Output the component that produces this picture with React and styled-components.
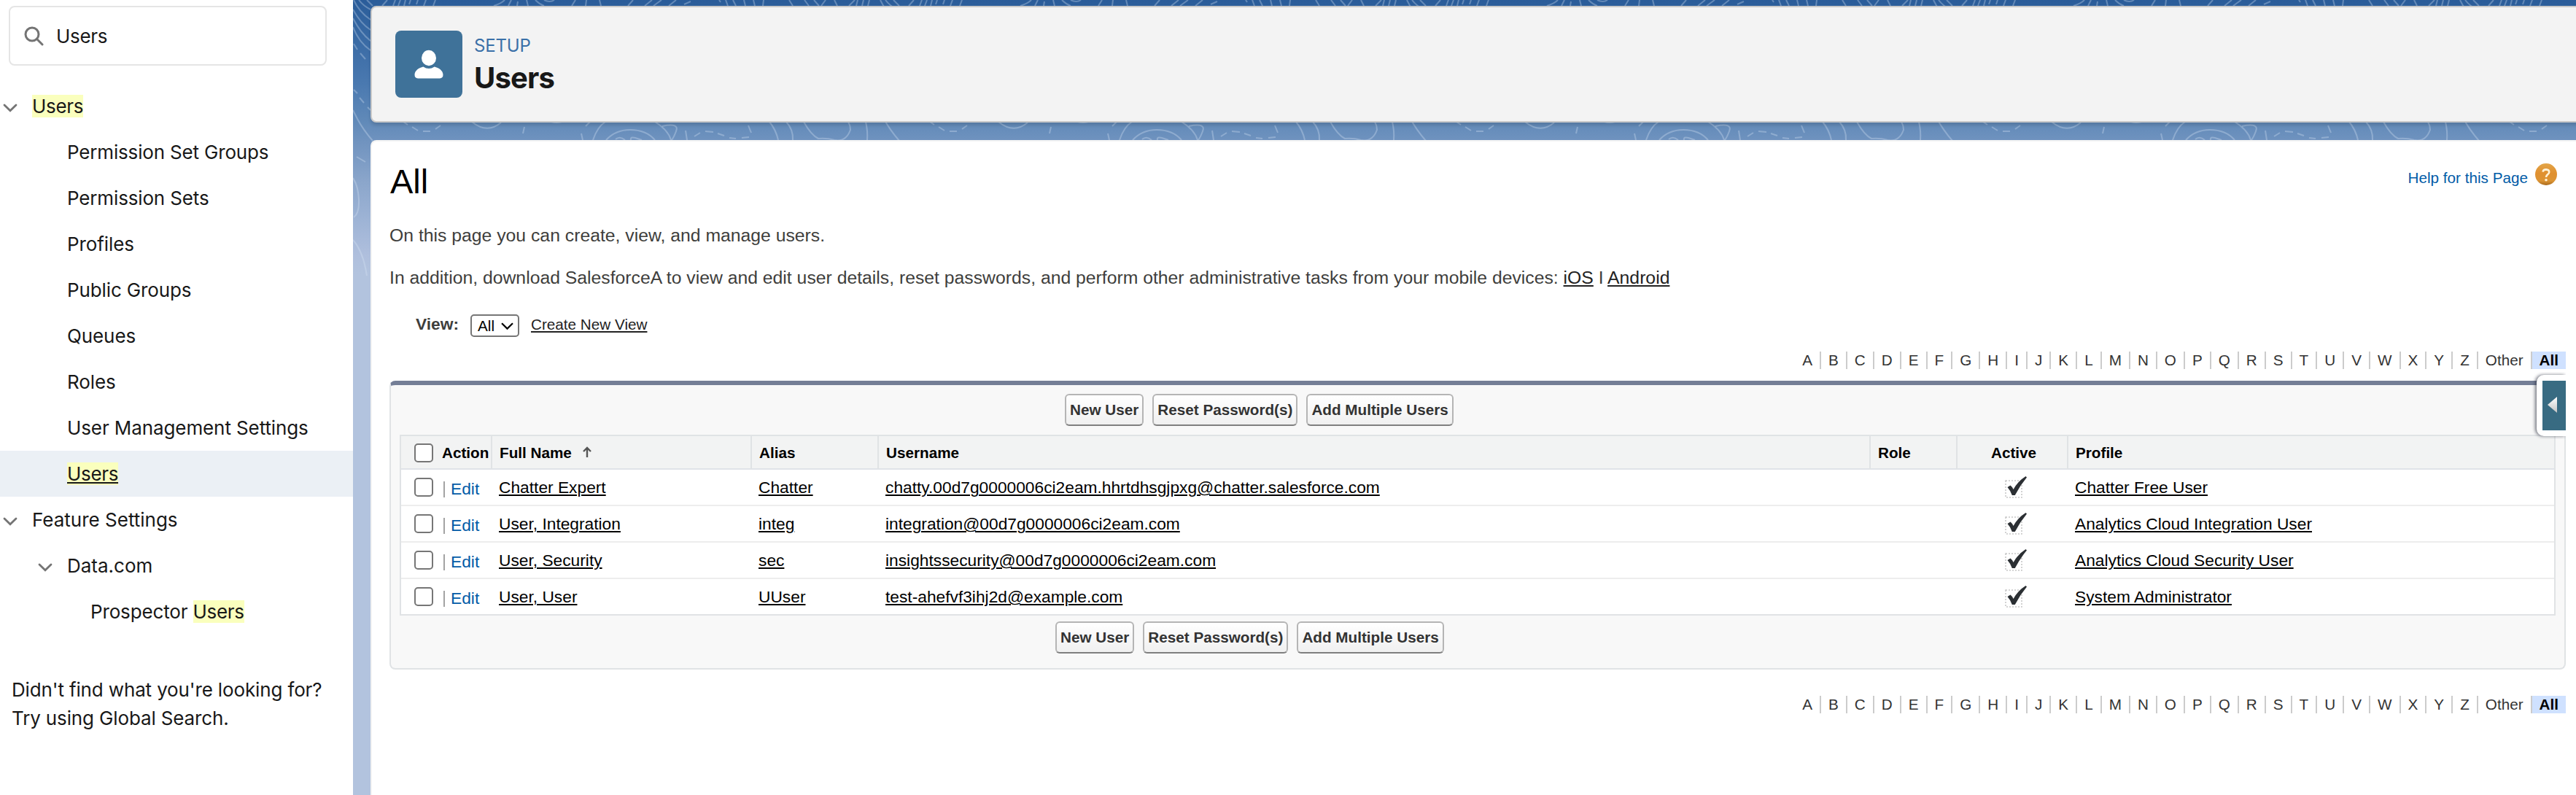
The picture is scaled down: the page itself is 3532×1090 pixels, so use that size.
import React from "react";
import styled, { createGlobalStyle, css } from "styled-components";

const Global = createGlobalStyle`
  *, *::before, *::after { box-sizing: border-box; }
  html, body { margin: 0; padding: 0; background: #fff; }
  body { overflow: hidden; }
`;

const ui = css`font-family: Inter, "Liberation Sans", sans-serif;`;
const classic = css`font-family: "Liberation Sans", Arial, sans-serif;`;

const Page = styled.div`
  display: flex;
  width: 3532px;
  height: 1090px;
  overflow: hidden;
  ${classic}
`;

/* ---------- sidebar ---------- */
const Sidebar = styled.nav`
  flex: 0 0 484px;
  background: #fff;
  color: #181818;
  font-size: 26px;
  ${ui}
`;
const SearchBox = styled.label`
  display: flex;
  align-items: center;
  gap: 17px;
  margin: 8px 36px 24px 12px;
  height: 82px;
  padding-left: 19px;
  border: 2px solid #e5e5e5;
  border-radius: 8px;
  letter-spacing: -0.34px;
`;
const Tree = styled.ul`
  margin: 0;
  padding: 0;
  list-style: none;
`;
const TreeRow = styled.li`
  display: flex;
  align-items: center;
  height: 63px;
  padding-left: ${(p) => p.$indent}px;
  background: ${(p) => (p.$selected ? "#ebf0f5" : "transparent")};
  letter-spacing: ${(p) => p.$tight || 0}px;
  text-decoration: ${(p) => (p.$selected ? "underline" : "none")};
  text-decoration-thickness: 2px;
  text-underline-offset: 2px;
  white-space: pre;
`;
const Chevron = styled.svg`
  flex: none;
  width: 20px;
  height: 12px;
  margin: 4px 20px 0 0;
`;
const Mark = styled.mark`
  background: #faffbd;
  color: inherit;
  letter-spacing: -0.34px;
`;
const Hint = styled.p`
  margin: 56px 0 0 16px;
  line-height: 39px;
  letter-spacing: -0.14px;
`;

/* ---------- stage ---------- */
const Stage = styled.main`
  position: relative;
  flex: 1;
  min-width: 0;
  display: flex;
  flex-direction: column;
  gap: 24px;
  padding: 8px 0 0 24px;
  overflow: hidden;
  background: linear-gradient(#2a5c99 0, #2f619d 16px, #4a79b0 115px, #6089b8 165px, #7093bf 194px, #8ba6cb 250px, #9db3d5 300px, #afbfdd 350px, #b2c3de 375px);
`;
const Topography = styled.svg`
  position: absolute;
  left: 0;
  top: 0;
  width: 100%;
  height: 400px;
`;
const HeaderCard = styled.header`
  position: relative;
  display: flex;
  align-items: flex-start;
  gap: 16px;
  height: 160px;
  margin-right: -12px;
  padding: 32px 0 0 32px;
  background: #f3f3f3;
  border: 2px solid #c9c9c9;
  border-radius: 8px;
  box-shadow: 0 4px 4px rgba(0, 0, 0, 0.12);
  ${ui}
`;
const AppIcon = styled.span`
  display: grid;
  place-items: center;
  width: 92px;
  height: 92px;
  border-radius: 8px;
  background: #3f7299;
`;
const Eyebrow = styled.div`
  margin-top: 6px;
  font-size: 24px;
  line-height: 30px;
  letter-spacing: -0.2px;
  color: #3a70a8;
`;
const PageName = styled.h1`
  margin: 0;
  font-size: 40px;
  line-height: 57px;
  font-weight: 700;
  letter-spacing: -0.8px;
  color: #181818;
`;
const Card = styled.section`
  position: relative;
  flex: 1;
  margin-right: -12px;
  padding: 27px 24px 0 24px;
  background: #fff;
  border: 2px solid #f3f3f3;
  border-bottom: 0;
  border-radius: 8px 8px 0 0;
`;
const TitleRow = styled.div`
  display: flex;
  justify-content: space-between;
  height: 56px;
  margin-bottom: 31px;
`;
const Title = styled.h2`
  margin: 0 0 0 1px;
  font-size: 47px;
  font-weight: 400;
  line-height: 56px;
  color: #000;
`;
const Help = styled.a`
  display: flex;
  gap: 10px;
  margin: 3px 12px 0 0;
  color: #015ba7;
  font-size: 20.7px;
  line-height: 39px;
`;
const Para = styled.p`
  margin: 0 0 28px;
  font-size: 24.75px;
  line-height: 30px;
  color: #3e3e3c;
`;
const Link = styled.a`
  color: ${(p) => p.$c || "#000"};
  text-decoration: underline;
  text-decoration-thickness: 2px;
  text-underline-offset: 2px;
`;
const ViewBar = styled.div`
  display: flex;
  align-items: flex-start;
  height: 31px;
  margin: 35px 0 20px 36px;
  font-size: 20.7px;
  line-height: 28px;
`;
const ViewLabel = styled.b`
  width: 75px;
  font-size: 22.75px;
  line-height: 26px;
  color: #3e3e3c;
`;
const Picker = styled.span`
  display: flex;
  align-items: center;
  gap: 8px;
  width: 67px;
  height: 31px;
  margin-right: 16px;
  padding-left: 8px;
  border: 2px solid #767676;
  border-radius: 5px;
  color: #000;
`;
const Rolodex = styled.div`
  display: flex;
  justify-content: flex-end;
  height: 24px;
  font-size: 20.7px;
  line-height: 24px;
  color: #333;
`;
const Letter = styled.span`
  padding: 0 10px;
  border-right: ${(p) => (p.$on ? "0" : "2px solid #ccc")};
  background: ${(p) => (p.$on ? "#cfe1ff" : "transparent")};
  color: ${(p) => (p.$on ? "#000" : "inherit")};
  font-weight: ${(p) => (p.$on ? 700 : 400)};
`;
const Panel = styled.div`
  position: relative;
  height: 396px;
  margin: 16px 0 36px;
  background: #f8f8f8;
  border: 2px solid #e0e3e5;
  border-top: 6px solid #747e96;
  border-radius: 8px;
`;
const Buttons = styled.div`
  display: flex;
  gap: 12px;
  padding: ${(p) => p.$pad};
`;
const Button = styled.button`
  height: 44px;
  padding: 0 5px;
  border: 2px solid #b5b5b5;
  border-bottom-color: #7f7f7f;
  border-radius: 6px;
  background: linear-gradient(#fff, #f0f0f0);
  color: #333;
  font: 700 20.7px/40px "Liberation Sans", Arial, sans-serif;
`;
const Table = styled.div`
  margin: 0 12px;
  border: 2px solid #e0e3e5;
  background: #fff;
  font-size: 22.75px;
`;
const Row = styled.div`
  display: grid;
  grid-template-columns: 123px 356px 174px 1360px 119px 152px 1fr;
  height: 50px;
  line-height: 48px;
  border-bottom: 2px solid #ededed;
  &:last-child { height: 48px; border-bottom: 0; }
`;
const HeadRow = styled(Row)`
  height: 46px;
  line-height: 45px;
  font-size: 20.7px;
  font-weight: 700;
  background: #f2f3f3;
  border-bottom-color: #e0e3e8;
`;
const Cell = styled.div`
  padding-left: ${(p) => (p.$center ? 0 : 11)}px;
  text-align: ${(p) => (p.$center ? "center" : "left")};
`;
const HeadCell = styled.div`
  padding-left: ${(p) => (p.$center ? 4 : 10)}px;
  border-left: 2px solid #e0e3e5;
  text-align: ${(p) => (p.$center ? "center" : "left")};
`;
const ActionCell = styled.div`
  display: flex;
  align-items: center;
  padding-left: 18px;
  line-height: 44px;
`;
const Box = styled.span`
  width: 26px;
  height: 26px;
  margin-right: ${(p) => p.$gap}px;
  border: 2px solid #767676;
  border-radius: 5px;
  background: #fff;
`;
const Bar = styled.span`
  width: 2px;
  height: 22px;
  margin: 6px 8px 0 0;
  background: #a3a3a3;
`;
const Edit = styled.a`
  padding-top: 4px;
  color: #015ba7;
`;
const Arrow = styled.svg`
  width: 14px;
  height: 16px;
  margin-left: 14px;
`;
const Check = styled.svg`
  display: block;
  width: 32px;
  height: 34px;
  margin: 7px 0 0 66px;
`;
const Drawer = styled.div`
  position: absolute;
  right: -2px;
  top: -14px;
  width: 40px;
  height: 84px;
  padding: 8px 0 8px 8px;
  border-radius: 10px 0 0 10px;
  background: #fff;
  box-shadow: -2px 0 4px rgba(40, 45, 60, 0.65);
  clip-path: inset(-4px 0 -4px -8px);
`;
const DrawerFace = styled.div`
  height: 68px;
  background: #386b82;
`;

const Down = () => (
  <Chevron viewBox="0 0 20 12">
    <path d="M2 2 L10 9.8 L18 2" fill="none" stroke="#747474" strokeWidth="2.8" strokeLinecap="round" />
  </Chevron>
);

/* Contour lines of one background tile, 722px wide. */
const contours = [
  "M0 151Q3 157 6 163Q14 178 27 193",
  "M8 0Q14 8 24 13M1 0Q8 16 24 27M0 13Q10 32 24 41M0 25Q10 45 24 56M0 37Q8 58 24 69",
  "M0 244C9 258 12 290 1 298", "M0 329Q14 345 19 378",
  "M19 0L27 8M40 8L47 0M55 8L58 0M62 8L65 0M70 8L72 0M77 6L79 0M87 6L89 0M97 8L100 0M110 8L113 0",
  "M193 8Q203 5 208 0M213 8L217 0M225 8L226 2M238 0L240 8M250 0Q256 6 262 8M262 0Q270 4 276 0M300 8L305 0M319 8L320 0M338 0L340 8",
  "M377 8L384 0M400 8L410 0M412 8L423 0M433 8L443 0M454 6L463 2M502 0L504 3",
  "M511 0L514 8M521 0L525 8M536 0L538 8M549 0L551 8M562 8L563 0M598 0L603 8M619 0L625 8M632 0L639 8M642 8L648 0M660 0L664 8M680 8L688 0M690 8L692 0M698 8L700 0M706 8L708 0",
  "M163 167Q184 184 203 168", "M272 167Q279 169 286 167",
  "M329 192Q335 174 346 167M414 167Q432 178 436 192",
  "M347 192Q360 178 380 178Q402 178 414 192",
  "M360 191Q366 186 373 192M381 192Q380 187 387 189L396 192",
  "M424 173Q448 168 443 180Q440 188 437 192",
  "M571 167Q580 178 583 192M594 167Q604 178 603 192",
  "M618 167Q628 185 638 190Q650 189 660 192Q676 195 682 178Q682 172 679 167", "M703 167Q706 180 705 192",
];
const dashes =
  "M1 60L6 68M10 73L17 81M1 123L6 128M9 134L15 141M20 147L24 151M5 215L17 222M69 167L75 171M81 174L89 179M96 180L106 180M113 177L120 172M233 183L235 174M313 183L315 192M319 173L325 167M456 179L458 192M468 187L476 182M483 180L494 181M500 183L509 186M516 189L525 190M533 189L543 188M542 172L546 182";

const Pattern = () => (
  <Topography>
    <defs>
      <pattern id="topo" width="722" height="400" patternUnits="userSpaceOnUse">
        <g fill="none" stroke="#dbe6f6" strokeOpacity="0.32" strokeWidth="2">
          {contours.map((d) => <path key={d} d={d} />)}
          <path d={dashes} />
        </g>
      </pattern>
    </defs>
    <rect width="100%" height="400" fill="url(#topo)" />
  </Topography>
);

const letters = [..."ABCDEFGHIJKLMNOPQRSTUVWXYZ", "Other"];
const Alphabet = () => (
  <Rolodex>
    {letters.map((l) => <Letter key={l}>{l}</Letter>)}
    <Letter $on>All</Letter>
  </Rolodex>
);
const Actions = ({ pad }) => (
  <Buttons $pad={pad}>
    <Button>New User</Button>
    <Button>Reset Password(s)</Button>
    <Button>Add Multiple Users</Button>
  </Buttons>
);

const users = [
  ["Chatter Expert", "Chatter", "chatty.00d7g0000006ci2eam.hhrtdhsgjpxg@chatter.salesforce.com", "Chatter Free User"],
  ["User, Integration", "integ", "integration@00d7g0000006ci2eam.com", "Analytics Cloud Integration User"],
  ["User, Security", "sec", "insightssecurity@00d7g0000006ci2eam.com", "Analytics Cloud Security User"],
  ["User, User", "UUser", "test-ahefvf3ihj2d@example.com", "System Administrator"],
];
const userPages = [
  ["Permission Set Groups", -0.17],
  ["Permission Sets", -0.15],
  ["Profiles", -0.1],
  ["Public Groups", -0.12],
  ["Queues", -0.1],
  ["Roles", -0.1],
  ["User Management Settings", -0.1],
];

export default function App() {
  return (
    <Page>
      <Global />
      <Sidebar>
        <SearchBox>
          <svg width="27" height="27" viewBox="0 0 27 27" fill="none" stroke="#747474" strokeLinecap="round">
            <circle cx="11" cy="11" r="9" strokeWidth="3" />
            <path d="M17.8 17.8L25 25" strokeWidth="3" />
          </svg>
          Users
        </SearchBox>
        <Tree>
          <TreeRow $indent={4}><Down /><Mark>Users</Mark></TreeRow>
          {userPages.map(([p, tight]) => <TreeRow key={p} $indent={92} $tight={tight}>{p}</TreeRow>)}
          <TreeRow $indent={92} $selected><Mark>Users</Mark></TreeRow>
          <TreeRow $indent={4}><Down />Feature Settings</TreeRow>
          <TreeRow $indent={52}><Down />Data.com</TreeRow>
          <TreeRow $indent={124} $tight={-0.15}>Prospector <Mark>Users</Mark></TreeRow>
        </Tree>
        <Hint>Didn't find what you're looking for?<br />Try using Global Search.</Hint>
      </Sidebar>
      <Stage>
        <Pattern />
        <HeaderCard>
          <AppIcon>
            <svg width="40" height="40" viewBox="0 0 40 40" fill="#fff">
              <ellipse cx="20" cy="11.5" rx="10" ry="10.7" />
              <path d="M12.3 23.4Q20 28.6 27.7 23.4C33.5 24.8 39.5 28.6 39.5 34.6Q39.5 39.4 35 39.4H5Q0.5 39.4 0.5 34.6C0.5 28.6 6.5 24.8 12.3 23.4Z" />
            </svg>
          </AppIcon>
          <div>
            <Eyebrow>SETUP</Eyebrow>
            <PageName>Users</PageName>
          </div>
        </HeaderCard>
        <Card>
          <TitleRow>
            <Title>All</Title>
            <Help>
              Help for this Page
              <svg width="30" height="30" viewBox="0 0 30 30">
                <defs>
                  <linearGradient id="amber" x1="0" y1="0" x2="0" y2="1">
                    <stop offset="0" stopColor="#e3a548" />
                    <stop offset="0.45" stopColor="#e09030" />
                    <stop offset="0.8" stopColor="#dc9434" />
                    <stop offset="1" stopColor="#a96a1c" />
                  </linearGradient>
                </defs>
                <circle cx="15" cy="15" r="15" fill="url(#amber)" />
                <path d="M10.6 11.6Q11 8.4 15 8.4Q19.2 8.6 19.2 12Q19.2 14 17 15.4Q15 16.8 15 19" fill="none" stroke="#fff3d8" strokeWidth="2.6" />
                <circle cx="15" cy="22.8" r="1.8" fill="#fff3d8" />
              </svg>
            </Help>
          </TitleRow>
          <Para>On this page you can create, view, and manage users.</Para>
          <Para>
            In addition, download SalesforceA to view and edit user details, reset passwords, and perform other administrative tasks from your mobile devices:{" "}
            <Link $c="#222">iOS</Link> I <Link $c="#222">Android</Link>
          </Para>
          <ViewBar>
            <ViewLabel>View:</ViewLabel>
            <Picker>
              All
              <svg width="20" height="12" viewBox="0 0 20 12"><path d="M2 2.2L9.5 9.6L17 2.2" fill="none" stroke="#000" strokeWidth="2.2" /></svg>
            </Picker>
            <Link $c="#222">Create New View</Link>
          </ViewBar>
          <Alphabet />
          <Panel>
            <Actions pad="12px 0 12px 924px" />
            <Table>
              <HeadRow>
                <ActionCell><Box $gap={12} />Action</ActionCell>
                <HeadCell>
                  Full Name
                  <Arrow viewBox="0 0 14 16"><path d="M7 15V2M2 7L7 2L12 7" fill="none" stroke="#555" strokeWidth="2.4" /></Arrow>
                </HeadCell>
                <HeadCell>Alias</HeadCell>
                <HeadCell>Username</HeadCell>
                <HeadCell>Role</HeadCell>
                <HeadCell $center>Active</HeadCell>
                <HeadCell>Profile</HeadCell>
              </HeadRow>
              {users.map(([name, alias, login, profile]) => (
                <Row key={name}>
                  <ActionCell><Box $gap={14} /><Bar /><Edit>Edit</Edit></ActionCell>
                  <Cell><Link>{name}</Link></Cell>
                  <Cell><Link>{alias}</Link></Cell>
                  <Cell><Link>{login}</Link></Cell>
                  <Cell />
                  <Cell $center>
                    <Check viewBox="0 0 32 34">
                      <rect x="2" y="8" width="22" height="23" fill="none" stroke="#c8c8c8" strokeWidth="1.6" strokeDasharray="2 2" />
                      <path d="M4.5 17L8.5 14.6Q11 16.5 12.6 20Q18.5 9 29.5 2L31 3.6Q21.5 15 14.8 28H10.8Q8.5 21.5 4.5 17Z" fill="#2b2f33" />
                    </Check>
                  </Cell>
                  <Cell><Link>{profile}</Link></Cell>
                </Row>
              ))}
            </Table>
            <Actions pad="8px 0 0 911px" />
            <Drawer>
              <DrawerFace>
                <svg width="32" height="68" viewBox="0 0 32 68">
                  <defs>
                    <linearGradient id="silver" x1="0" y1="0" x2="0" y2="1">
                      <stop offset="0" stopColor="#fff" />
                      <stop offset="1" stopColor="#c4c4c4" />
                    </linearGradient>
                  </defs>
                  <path d="M20 22V44L7 33Z" fill="url(#silver)" />
                </svg>
              </DrawerFace>
            </Drawer>
          </Panel>
          <Alphabet />
        </Card>
      </Stage>
    </Page>
  );
}
